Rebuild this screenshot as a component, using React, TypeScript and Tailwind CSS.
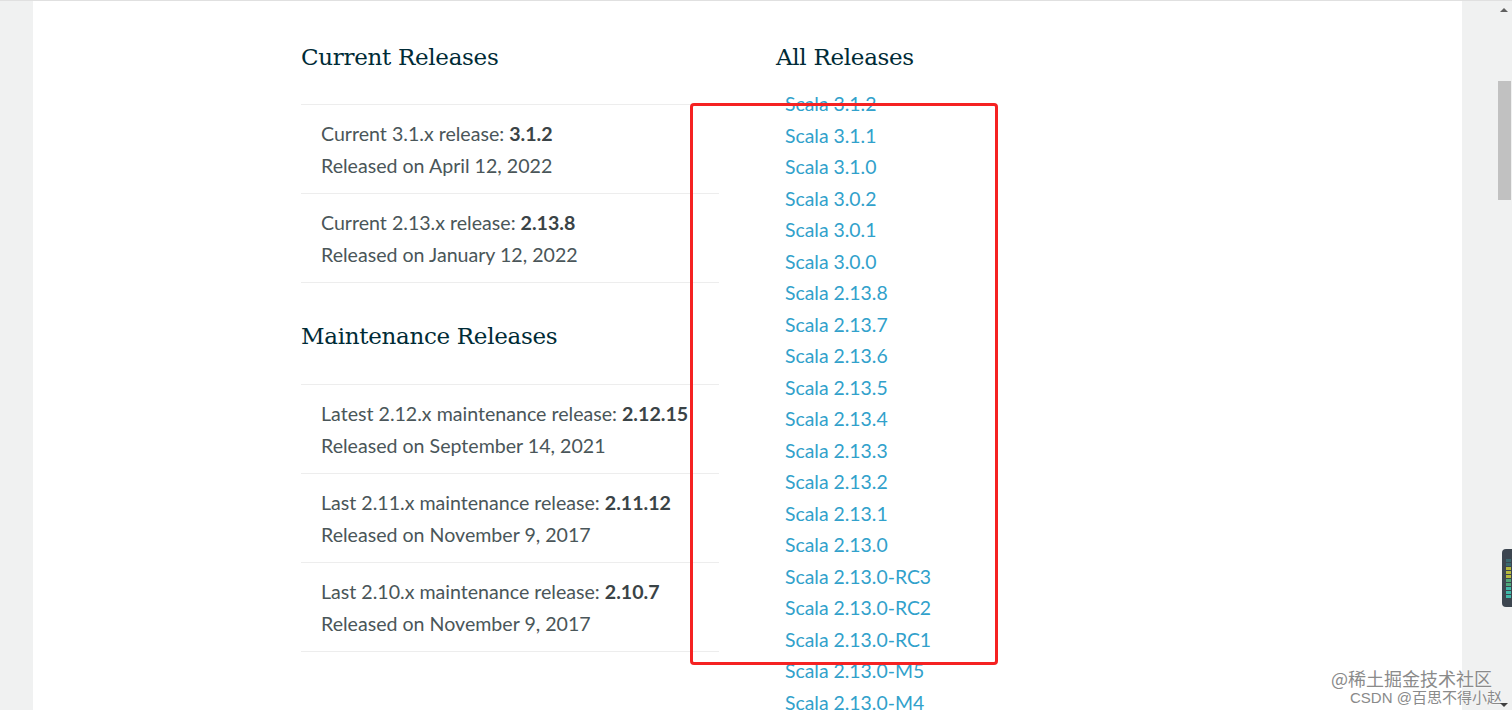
import React from 'react';

const CURRENT = [
  { label: 'Current 3.1.x release:', version: '3.1.2', date: 'April 12, 2022' },
  { label: 'Current 2.13.x release:', version: '2.13.8', date: 'January 12, 2022' },
];

const MAINTENANCE = [
  { label: 'Latest 2.12.x maintenance release:', version: '2.12.15', date: 'September 14, 2021' },
  { label: 'Last 2.11.x maintenance release:', version: '2.11.12', date: 'November 9, 2017' },
  { label: 'Last 2.10.x maintenance release:', version: '2.10.7', date: 'November 9, 2017' },
];

const ALL = [
  '3.1.2', '3.1.1', '3.1.0', '3.0.2', '3.0.1', '3.0.0',
  '2.13.8', '2.13.7', '2.13.6', '2.13.5', '2.13.4', '2.13.3', '2.13.2', '2.13.1', '2.13.0',
  '2.13.0-RC3', '2.13.0-RC2', '2.13.0-RC1', '2.13.0-M5', '2.13.0-M4',
];

const heading = "font-['DejaVu_Serif',serif] text-[23px] leading-[30px] text-[#002b36] tracking-[-0.3px]";

function ReleaseList({ items }: { items: typeof CURRENT }) {
  return (
    <div className="border-b border-[#ededed]">
      {items.map((r, i) => (
        <div key={i} className="border-t border-[#ededed] pl-5 pt-[13px] pb-[11px] leading-[32px] text-[19.6px] whitespace-nowrap">
          <div>
            {r.label} <b className="font-bold text-[#3a4346]">{r.version}</b>
          </div>
          <div>Released on {r.date}</div>
        </div>
      ))}
    </div>
  );
}

export default function App() {
  return (
    <div className="relative w-full h-[710px] overflow-hidden bg-[#f0f1f1] flex font-['Lato',sans-serif] text-[#4a5659] border-t border-[#e0e0e0]">
      <div className="w-[33px] shrink-0" />
      <div className="flex-1 bg-white pt-[41px] pl-[268px] flex">
        <div className="w-[418px] shrink-0">
          <h2 className={heading}>Current Releases</h2>
          <div className="mt-[32px]">
            <ReleaseList items={CURRENT} />
          </div>
          <h2 className={`${heading} mt-[38px]`}>Maintenance Releases</h2>
          <div className="mt-[33px]">
            <ReleaseList items={MAINTENANCE} />
          </div>
        </div>
        <div className="ml-[57px]">
          <h2 className={heading}>All Releases</h2>
          <ul className="mt-[16px] pl-[9px] text-[19.4px] leading-[31.5px] text-[#31a1cb]">
            {ALL.map(v => (
              <li key={v}>Scala {v}</li>
            ))}
          </ul>
        </div>
      </div>
      <div className="w-[50px] shrink-0 flex justify-end">
        <div className="w-[16px] flex flex-col items-center pt-[7px]">
          <div className="w-0 h-0 border-l-[4px] border-r-[4px] border-b-[4px] border-l-transparent border-r-transparent border-b-[#606060]" />
          <div className="mt-[69px] w-[13px] h-[119px] bg-[#c1c1c1]" />
        </div>
      </div>

      {/* annotation box */}
      <div className="absolute left-[690px] top-[102px] w-[308px] h-[562px] border-[3px] border-[#f52222] rounded-[4px]" />

      {/* side widget */}
      <div className="absolute left-[1502px] top-[548px] w-[12px] h-[58px] rounded-l-[4px] bg-[#3d4650] flex flex-col items-center pt-[10px] gap-[1px]">
        {['#3a6a70', '#3a6a70', '#b5b83c', '#b5b83c', '#b5b83c', '#4fa87a', '#4fa87a', '#3fb8a8', '#3fb8a8', '#3fb8a8'].map((c, i) => (
          <div key={i} className="w-[5px] h-[3px]" style={{ backgroundColor: c }} />
        ))}
      </div>

      {/* watermark */}
      <div className="absolute left-[1331px] top-[667px] text-[18px] leading-[20px] text-[#8a8a8a] font-['Noto_Sans_CJK_SC',sans-serif] [text-shadow:0_0_2px_#fff]">
        @稀土掘金技术社区
      </div>
      <div className="absolute left-[1350px] top-[688px] text-[15px] leading-[18px] text-[#8a8a8a] font-['Liberation_Sans','Noto_Sans_CJK_SC',sans-serif] [text-shadow:0_0_2px_#fff]">
        CSDN @百思不得小赵
      </div>
      <div className="absolute left-[1500px] top-[702px] w-0 h-0 border-l-[4px] border-r-[4px] border-t-[4px] border-l-transparent border-r-transparent border-t-[#404040]" />
    </div>
  );
}
